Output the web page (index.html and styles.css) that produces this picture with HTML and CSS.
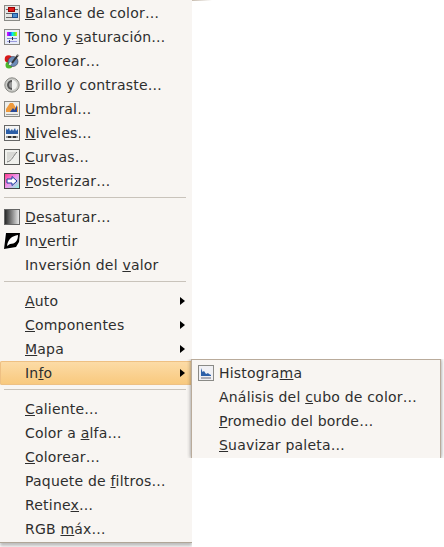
FILE: index.html
```html
<!DOCTYPE html>
<html lang="es">
<head>
<meta charset="utf-8">
<title>Menú Colores</title>
<link rel="stylesheet" href="styles.css">
</head>
<body>
<div class="corner"></div>
<div class="menu">
  <div class="item"><span class="ico"><svg viewBox="0 0 16 16" width="16" height="16"><rect x=".5" y=".5" width="15" height="15" fill="#e4e6e4" stroke="#8a8a86"/><path d="M2 4.500h12M2 8.500h12M2 12.500h12" stroke="#666"/><rect x="4.500" y="2.500" width="6" height="4" fill="#e01818" stroke="#900"/><rect x="8.500" y="8.500" width="5" height="4" fill="#4a90d0" stroke="#1c4f90"/></svg></span><span class="lbl"><u>B</u>alance de color…</span></div>
  <div class="item"><span class="ico"><svg viewBox="0 0 16 16" width="16" height="16"><defs><linearGradient id="hue"><stop offset="0" stop-color="#f0f"/><stop offset=".3" stop-color="#33f"/><stop offset=".55" stop-color="#0ee"/><stop offset=".8" stop-color="#4e4"/><stop offset="1" stop-color="#ee0"/></linearGradient></defs><rect x=".5" y=".5" width="15" height="15" fill="#e8ecf8" stroke="#8a8a86"/><rect x="3" y="3" width="10" height="4" fill="url(#hue)"/><path d="M3 9.500h10" stroke="#78c"/><path d="M3 12.500h10" stroke="#99d"/><path d="M8.500 8v3M5.500 11v3" stroke="#334"/></svg></span><span class="lbl">Tono y <u>s</u>aturación…</span></div>
  <div class="item"><span class="ico"><svg viewBox="0 0 16 16" width="16" height="16"><circle cx="4.500" cy="6" r="3.800" fill="#d81818"/><circle cx="5" cy="12" r="3.500" fill="#4cb82c"/><circle cx="9" cy="8.500" r="5" fill="#6c8cb8" stroke="#3a3a44" stroke-width=".6"/><path d="M8 10 14 2" stroke="#333" stroke-width="2"/><path d="M13 1.500 15 3" stroke="#999" stroke-width="1.500"/><path d="M7 9.500 5.500 12" stroke="#eee" stroke-width="2"/></svg></span><span class="lbl"><u>C</u>olorear…</span></div>
  <div class="item"><span class="ico"><svg viewBox="0 0 16 16" width="16" height="16"><circle cx="8" cy="8" r="7.200" fill="#c8c8c4" stroke="#8a8a86"/><circle cx="8" cy="8" r="5" fill="#f2f2f0"/><path d="M8 3a5 5 0 0 0 0 10z" fill="#555"/><path d="M8 5a3 3 0 0 0 0 6z" fill="#999"/></svg></span><span class="lbl"><u>B</u>rillo y contraste…</span></div>
  <div class="item"><span class="ico"><svg viewBox="0 0 16 16" width="16" height="16"><rect x=".5" y=".5" width="15" height="15" fill="#eeeeea" stroke="#8a8a86"/><path d="M2 11V8l4-6h3l3 5 2-2v6z" fill="#ee9a3c"/><path d="M6 11 9 7l1.500 2L13 4v7z" fill="#2a4a98"/><path d="M2 13.500h12" stroke="#999"/></svg></span><span class="lbl"><u>U</u>mbral…</span></div>
  <div class="item"><span class="ico"><svg viewBox="0 0 16 16" width="16" height="16"><rect x=".5" y=".5" width="15" height="15" fill="#f4f4f4" stroke="#666"/><path d="M2 9V3l1 2 2-2 1 3 2-2 1 2 2-3 1 3 2-2v5z" fill="#2c5fa8"/><path d="M2 12h12" stroke="#333" stroke-width="2"/><path d="M3 11v2M8 11v2M13 11v2" stroke="#fff"/></svg></span><span class="lbl"><u>N</u>iveles…</span></div>
  <div class="item"><span class="ico"><svg viewBox="0 0 16 16" width="16" height="16"><rect x=".5" y=".5" width="15" height="15" fill="#f0f0ec" stroke="#5a5a58"/><path d="M3 13V3h10z" fill="#d8d8d4"/><path d="M3 13C8 12 9 7 13 3" fill="none" stroke="#777"/></svg></span><span class="lbl"><u>C</u>urvas…</span></div>
  <div class="item"><span class="ico"><svg viewBox="0 0 16 16" width="16" height="16"><defs><linearGradient id="post" x1="0" y1="0" x2="1" y2="1"><stop offset="0" stop-color="#f38"/><stop offset=".5" stop-color="#e9e"/><stop offset="1" stop-color="#8fd"/></linearGradient></defs><rect x=".5" y=".5" width="15" height="15" fill="url(#post)" stroke="#444"/><path d="M3 6h5V3.500L13 8l-5 4.500V10H3z" fill="#fff" stroke="#1a3aa0"/></svg></span><span class="lbl"><u>P</u>osterizar…</span></div>
  <div class="sep"></div>
  <div class="item"><span class="ico"><svg viewBox="0 0 16 16" width="16" height="16"><defs><linearGradient id="gray"><stop offset="0" stop-color="#222"/><stop offset="1" stop-color="#eee"/></linearGradient></defs><rect x=".5" y=".5" width="15" height="15" fill="url(#gray)" stroke="#666"/></svg></span><span class="lbl"><u>D</u>esaturar…</span></div>
  <div class="item"><span class="ico"><svg viewBox="0 0 16 16" width="16" height="16"><rect width="16" height="16" fill="#fff"/><path d="M2 0h14l-1 9-3 5-6 1-6 1 1-8z" fill="#000"/><path d="M3 13C4 6 8 3 14 2c0 6-3 9-8 9z" fill="#fff"/></svg></span><span class="lbl">In<u>v</u>ertir</span></div>
  <div class="item"><span class="ico"></span><span class="lbl">Inversión del <u>v</u>alor</span></div>
  <div class="sep"></div>
  <div class="item"><span class="ico"></span><span class="lbl"><u>A</u>uto</span><span class="arrow"></span></div>
  <div class="item"><span class="ico"></span><span class="lbl"><u>C</u>omponentes</span><span class="arrow"></span></div>
  <div class="item"><span class="ico"></span><span class="lbl"><u>M</u>apa</span><span class="arrow"></span></div>
  <div class="item active"><span class="ico"></span><span class="lbl">In<u>f</u>o</span><span class="arrow"></span></div>
  <div class="sep"></div>
  <div class="item"><span class="ico"></span><span class="lbl"><u>C</u>aliente…</span></div>
  <div class="item"><span class="ico"></span><span class="lbl">Color a <u>a</u>lfa…</span></div>
  <div class="item"><span class="ico"></span><span class="lbl"><u>C</u>olorear…</span></div>
  <div class="item"><span class="ico"></span><span class="lbl">Paquete de <u>f</u>iltros…</span></div>
  <div class="item"><span class="ico"></span><span class="lbl">Retine<u>x</u>…</span></div>
  <div class="item"><span class="ico"></span><span class="lbl">RGB <u>m</u>áx…</span></div>
</div>
<div class="submenu">
  <div class="item"><span class="ico"><svg viewBox="0 0 16 16" width="16" height="16"><rect x=".5" y=".5" width="15" height="15" fill="#f0f0f4" stroke="#8a8a86"/><path d="M3 11V3l1.500 4L6 6l2 3 2-1 1 1 2 1v1z" fill="#2c5fa8"/><path d="M3 13h10" stroke="#6a6a78"/></svg></span><span class="lbl">Histogra<u>m</u>a</span></div>
  <div class="item"><span class="ico"></span><span class="lbl">Análisis del <u>c</u>ubo de color…</span></div>
  <div class="item"><span class="ico"></span><span class="lbl"><u>P</u>romedio del borde…</span></div>
  <div class="item"><span class="ico"></span><span class="lbl"><u>S</u>uavizar paleta…</span></div>
</div>
</body>
</html>
```
FILE: styles.css
```css
html, body {
  margin: 0;
  padding: 0;
  height: 100%;
  overflow: hidden;
  background: #fff;
}
body {
  position: relative;
  font-family: "DejaVu Sans", sans-serif;
  font-size: 14px;
  letter-spacing: .2px;
  color: #2e2e2e;
}
.menu {
  width: 192px;
  padding: 1px 0 0;
  height: 541px;
  background: #f8f5f2;
  border-bottom: 1px solid #b0a698;
  box-shadow: 0 3px 3px rgba(90, 90, 90, .4);
  clip-path: inset(0 0 -6px 0);
}
.corner {
  position: absolute;
  left: 192px;
  top: 0;
  width: 20px;
  height: 1px;
  background: linear-gradient(90deg, #c8bdb0, #fff);
}
.item {
  display: flex;
  align-items: center;
  height: 24px;
  padding: 0 5px 0 4px;
}
.ico {
  width: 16px;
  height: 16px;
  margin-right: 5px;
  flex: none;
}
.ico svg {
  display: block;
}
.lbl {
  flex: 1;
  white-space: nowrap;
}
.arrow {
  width: 0;
  height: 0;
  border-left: 5px solid #000;
  border-top: 4px solid transparent;
  border-bottom: 4px solid transparent;
  margin-right: 2px;
}
.sep {
  height: 1px;
  margin: 4px 6px 7px 4px;
  background: #c9c3bb;
}
.active {
  background: linear-gradient(#fcdca8, #f8c87c);
  box-shadow: inset 0 0 0 1px #eec083;
  border-radius: 2px;
}
.submenu {
  position: absolute;
  left: 191px;
  top: 359px;
  width: 248px;
  height: 97px;
  padding: 1px 0 0;
  background: #f8f5f2;
  border: 1px solid #b9ab9b;
  border-bottom: 0;
  box-shadow: 0 0 4px rgba(60, 60, 60, .6);
  clip-path: inset(0 -4px 0 -4px);
}
.submenu .item {
  padding-left: 6px;
}
```
